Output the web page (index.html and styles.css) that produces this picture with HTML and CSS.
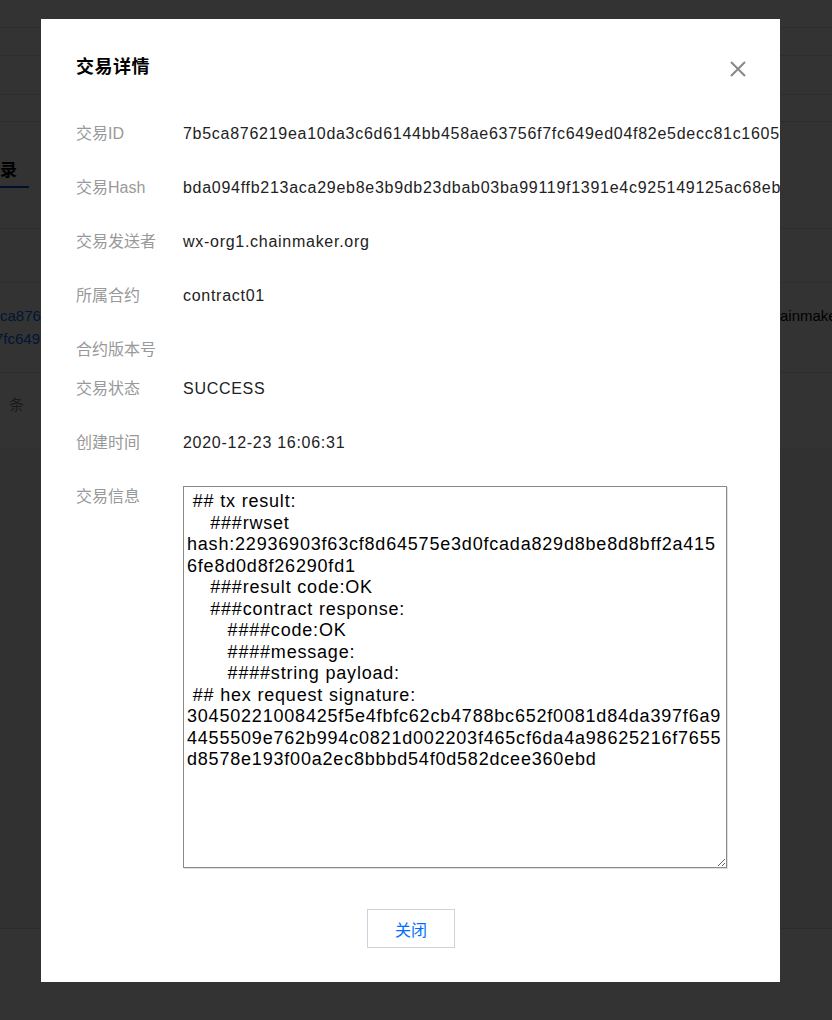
FILE: index.html
```html
<!DOCTYPE html>
<html lang="zh-CN">
<head>
<meta charset="utf-8">
<title>交易详情</title>
<link rel="stylesheet" href="styles.css">
</head>
<body>
<div class="page">
  <div class="band band-top"></div>
  <div class="band band-sub"></div>
  <div class="band band-gap"></div>
  <div class="band band-crumb"></div>
  <div class="tabs"><div class="tab">录</div></div>
  <div class="table">
    <div class="thead"></div>
    <div class="trow">
      <div class="cell-hash">
        <div class="hash-line">ca8762</div>
        <div class="hash-line hash-cut">7fc649</div>
      </div>
      <div class="cell-sender">ainmaker.org</div>
    </div>
    <div class="pager">条</div>
  </div>
  <div class="footer-area"></div>
</div>

<div class="mask">
  <div class="dialog">
    <div class="dialog-head">
      <h2 class="dialog-title">交易详情</h2>
      <button class="dialog-close" type="button" aria-label="关闭">
        <svg width="16" height="16" viewBox="0 0 16 16"><path d="M1 1 L15 15 M15 1 L1 15" stroke="#888" stroke-width="2" fill="none"/></svg>
      </button>
    </div>
    <div class="dialog-body">
      <div class="field"><div class="field-label">交易ID</div><div class="field-value">7b5ca876219ea10da3c6d6144bb458ae63756f7fc649ed04f82e5decc81c1605</div></div>
      <div class="field"><div class="field-label">交易Hash</div><div class="field-value">bda094ffb213aca29eb8e3b9db23dbab03ba99119f1391e4c925149125ac68eb</div></div>
      <div class="field"><div class="field-label">交易发送者</div><div class="field-value">wx-org1.chainmaker.org</div></div>
      <div class="field"><div class="field-label">所属合约</div><div class="field-value">contract01</div></div>
      <div class="field field-empty"><div class="field-label">合约版本号</div><div class="field-value"></div></div>
      <div class="field"><div class="field-label">交易状态</div><div class="field-value">SUCCESS</div></div>
      <div class="field"><div class="field-label">创建时间</div><div class="field-value">2020-12-23 16:06:31</div></div>
      <div class="field field-info"><div class="field-label">交易信息</div><div class="field-value">
<textarea class="tx-info" readonly>
 ## tx result:
    ###rwset
hash:22936903f63cf8d64575e3d0fcada829d8be8d8bff2a415
6fe8d0d8f26290fd1
    ###result code:OK
    ###contract response:
       ####code:OK
       ####message:
       ####string payload:
 ## hex request signature:
30450221008425f5e4fbfc62cb4788bc652f0081d84da397f6a9
4455509e762b994c0821d002203f465cf6da4a98625216f7655
d8578e193f00a2ec8bbbd54f0d582dcee360ebd</textarea>
      </div></div>
    </div>
    <div class="dialog-foot"><button class="btn" type="button">关闭</button></div>
  </div>
</div>
</body>
</html>
```

FILE: styles.css
```css
* { box-sizing: border-box; }
html, body { margin: 0; height: 100%; }
body {
  font-family: "Liberation Sans", "Noto Sans CJK SC", sans-serif;
  background: #fff;
  overflow: hidden;
  color: #000;
}

/* underlying page */
.page { width: 832px; }
.band { border-bottom: 1px solid #e6e6e6; }
.band-top { height: 28px; }
.band-sub { height: 28px; }
.band-gap { height: 39px; }
.band-crumb { height: 27px; }
.tabs { height: 66px; padding-top: 37px; }
.tab {
  width: 29px;
  height: 29px;
  font-size: 17px;
  font-weight: 700;
  line-height: 24px;
  border-bottom: 2px solid #0052d9;
}
.table { margin-top: 40px; border-top: 1px solid #e6e6e6; }
.thead { height: 54px; border-bottom: 1px solid #e6e6e6; }
.trow {
  height: 90px;
  display: flex;
  padding-top: 21px;
  border-bottom: 1px solid #e6e6e6;
  overflow: hidden;
}
.cell-hash {
  width: 780px;
  flex: none;
  font-size: 15px;
  line-height: 23px;
  color: #006eff;
  overflow: hidden;
  white-space: nowrap;
}
.hash-cut { text-indent: -5px; }
.cell-sender {
  flex: none;
  font-size: 15px;
  line-height: 23px;
  color: #000;
  white-space: nowrap;
}
.pager {
  height: 75px;
  padding: 21px 0 0 9px;
  font-size: 15px;
  line-height: 22px;
  color: #888;
}
.footer-area {
  height: 481px;
  background: #f2f3f5;
  border-bottom: 1px solid #dcdcdc;
}

/* modal */
.mask {
  position: fixed;
  inset: 0;
  background: rgba(0, 0, 0, 0.8);
  display: flex;
  align-items: flex-start;
  padding: 19px 0 0 41px;
}
.dialog {
  width: 739px;
  background: #fff;
  padding: 35px 34px 34px 35px;
  overflow: hidden;
}
.dialog-head {
  display: flex;
  justify-content: space-between;
  align-items: flex-start;
  height: 26px;
}
.dialog-title {
  margin: 0;
  font-size: 18px;
  font-weight: 700;
  line-height: 26px;
  letter-spacing: 0.5px;
  color: #000;
}
.dialog-close {
  border: 0;
  background: none;
  padding: 0;
  margin-top: 7px;
  width: 16px;
  height: 16px;
  display: block;
  cursor: pointer;
}
.dialog-close svg { display: block; }

.dialog-body { margin-top: 43px; }
.field {
  display: flex;
  margin-bottom: 32px;
  font-size: 16px;
  line-height: 22px;
}
.field-empty { margin-bottom: 17px; }
.field-info { margin-bottom: 0; }
.field-label {
  width: 107px;
  flex: none;
  color: #999;
}
.field-value {
  flex: 1;
  min-width: 0;
  color: #222;
  letter-spacing: 0.72px;
  white-space: nowrap;
}
.field-info .field-value { white-space: normal; }

.tx-info {
  display: block;
  margin: 0;
  width: 544px;
  height: 382px;
  padding: 4px 2px 3px 3px;
  border: 1px solid #8a8a8a;
  box-shadow: 1px 1px 0 rgba(0, 0, 0, 0.12);
  font-family: "Liberation Sans", "Noto Sans CJK SC", sans-serif;
  font-size: 18px;
  line-height: 21.5px;
  letter-spacing: 0.8px;
  color: #000;
  background: #fff;
  outline: none;
  resize: both;
}

.dialog-foot { margin-top: 41px; }
.btn {
  display: block;
  margin: 0 auto;
  width: 88px;
  height: 39px;
  border: 1px solid #cdd3dc;
  background: #fff;
  color: #006eff;
  font-family: "Liberation Sans", "Noto Sans CJK SC", sans-serif;
  font-size: 16px;
  padding: 0;
  cursor: pointer;
}
```
